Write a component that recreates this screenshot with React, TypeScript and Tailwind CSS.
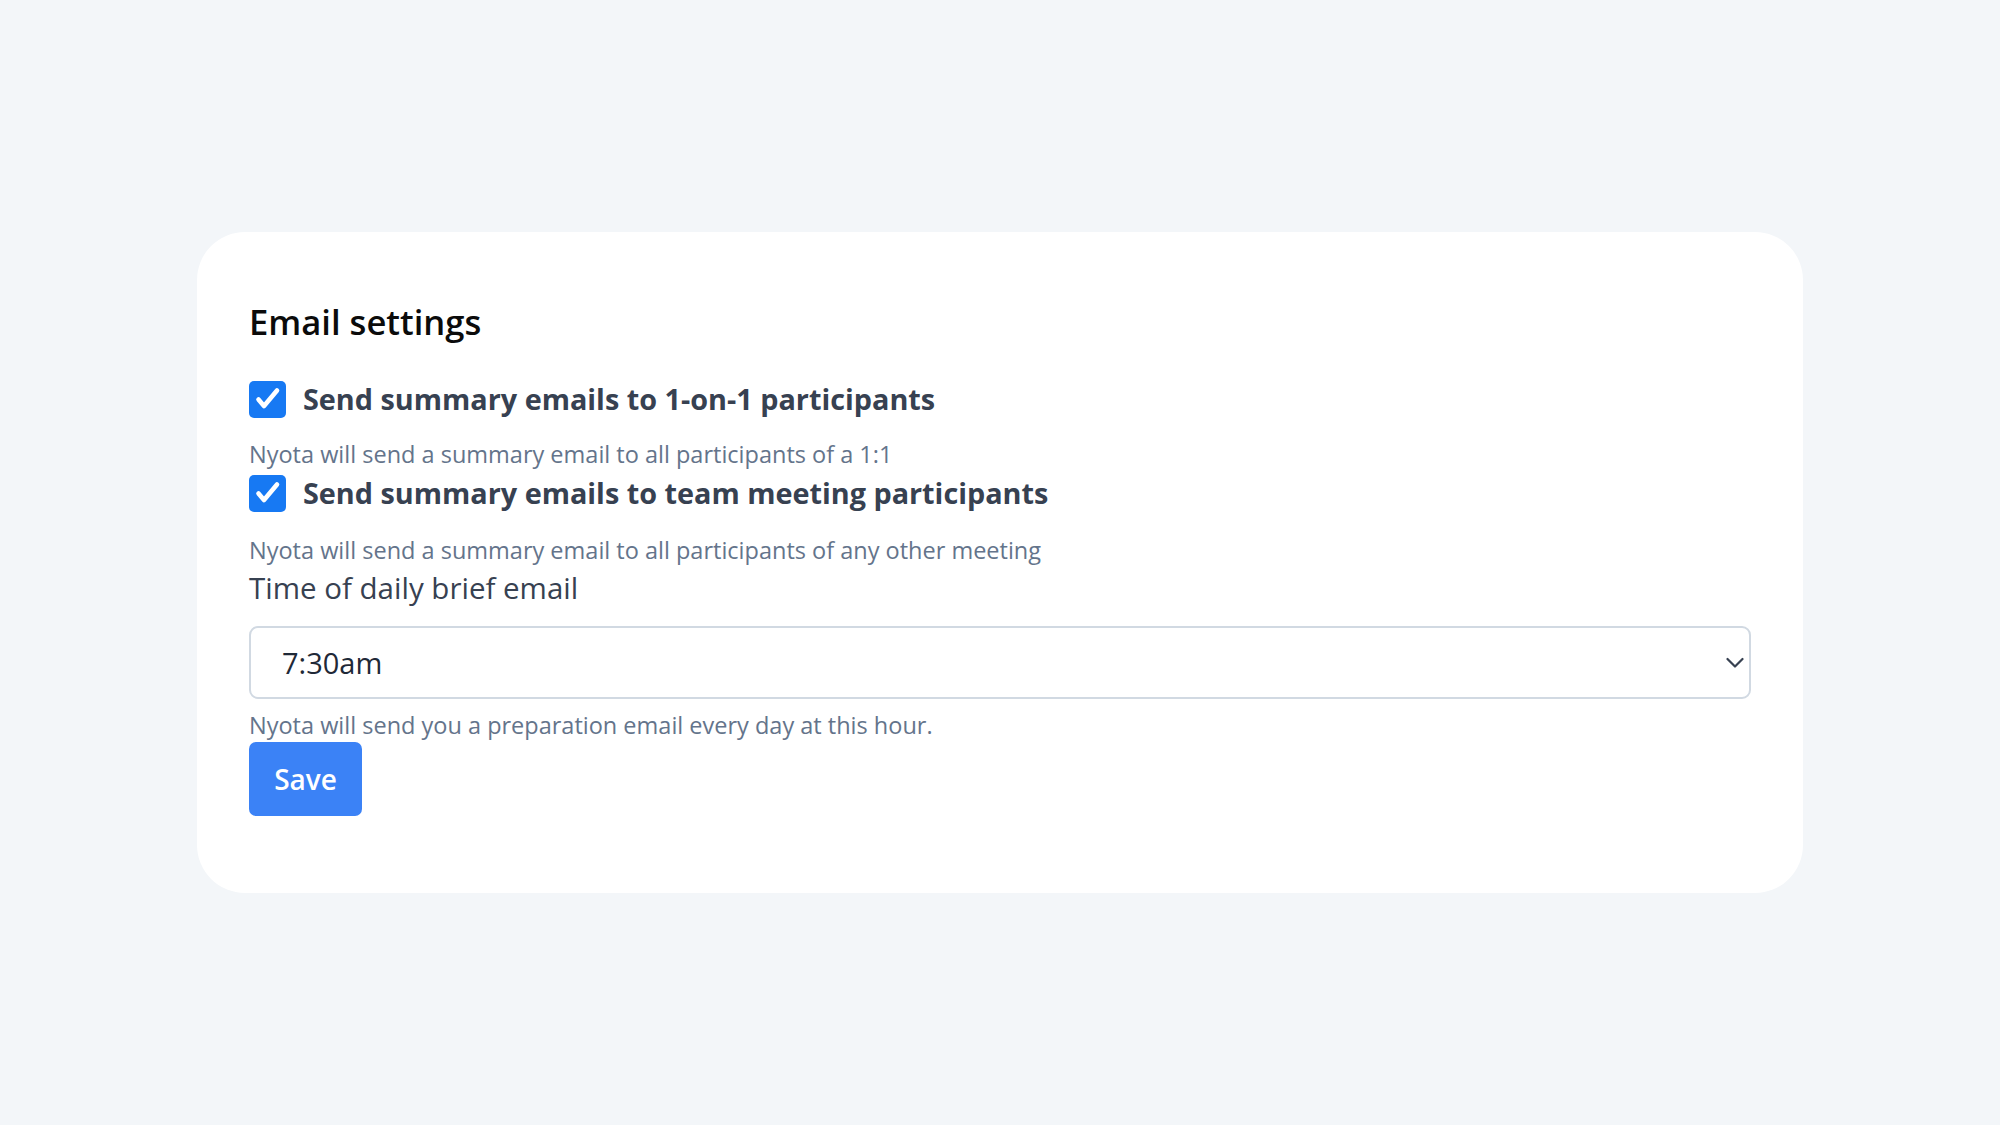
import { useState } from "react";

function CheckBox({ checked, onChange }: { checked: boolean; onChange: () => void }) {
  return (
    <button
      type="button"
      onClick={onChange}
      className={`flex h-[37px] w-[37px] shrink-0 items-center justify-center rounded-[5px] ${
        checked ? "bg-[#1779f3]" : "border-2 border-[#cbd5e1] bg-white"
      }`}
    >
      {checked && (
        <svg width="37" height="37" viewBox="0 0 37 37" fill="none">
          <path
            d="M9.5 18.5 15 25 28 9.5"
            stroke="white"
            strokeWidth="4.6"
            strokeLinecap="round"
            strokeLinejoin="round"
          />
        </svg>
      )}
    </button>
  );
}

export default function App() {
  const [oneOnOne, setOneOnOne] = useState(true);
  const [team, setTeam] = useState(true);
  const [time, setTime] = useState("7:30am");

  return (
    <div className="flex min-h-screen items-center justify-center bg-[#f3f6f9] font-['Open_Sans',sans-serif]">
      <div className="w-[1606px] rounded-[48px] bg-white px-[52px] pb-[77px] pt-[72px]">
        {/* Heading */}
        <h1 className="text-[34.6px] font-semibold leading-[36px] text-[#0b0b0b]">Email settings</h1>

        {/* 1-on-1 */}
        <div className="mt-[39px] flex h-[40px] items-center gap-[17px]">
          <CheckBox checked={oneOnOne} onChange={() => setOneOnOne(!oneOnOne)} />
          <span className="text-[28.8px] font-bold leading-[40px] text-[#374151]">
            Send summary emails to 1-on-1 participants
          </span>
        </div>
        <p className="mt-[20px] text-[23.5px] leading-[30px] text-[#64748b]">
          Nyota will send a summary email to all participants of a 1:1
        </p>

        {/* Team meetings */}
        <div className="mt-[4px] flex h-[40px] items-center gap-[17px]">
          <CheckBox checked={team} onChange={() => setTeam(!team)} />
          <span className="text-[28.8px] font-bold leading-[40px] text-[#374151]">
            Send summary emails to team meeting participants
          </span>
        </div>
        <p className="mt-[22px] text-[23.5px] leading-[30px] text-[#64748b]">
          Nyota will send a summary email to all participants of any other meeting
        </p>

        {/* Daily brief time */}
        <label className="mt-[5px] block text-[29.5px] leading-[36px] text-[#374151]">
          Time of daily brief email
        </label>
        <div className="relative mt-[20px]">
          <select
            value={time}
            onChange={(e) => setTime(e.target.value)}
            className="h-[73px] w-full appearance-none rounded-[9px] border-2 border-[#d1d9e2] bg-white pl-[31px] text-[29px] text-[#1f2937] outline-none"
          >
            <option>6:30am</option>
            <option>7:00am</option>
            <option>7:30am</option>
            <option>8:00am</option>
            <option>8:30am</option>
          </select>
          <svg
            className="pointer-events-none absolute right-[7px] top-1/2 -translate-y-1/2"
            width="18"
            height="12"
            viewBox="0 0 18 12"
            fill="none"
          >
            <path
              d="M1.5 2 9 9.5 16.5 2"
              stroke="#374151"
              strokeWidth="2.2"
              strokeLinecap="round"
              strokeLinejoin="round"
            />
          </svg>
        </div>
        <p className="mt-[11px] text-[23.5px] leading-[30px] text-[#64748b]">
          Nyota will send you a preparation email every day at this hour.
        </p>

        <button
          type="button"
          className="mt-[2px] h-[74px] w-[113px] rounded-[7px] bg-[#3b82f6] text-[28px] font-semibold text-white"
        >
          Save
        </button>
      </div>
    </div>
  );
}
